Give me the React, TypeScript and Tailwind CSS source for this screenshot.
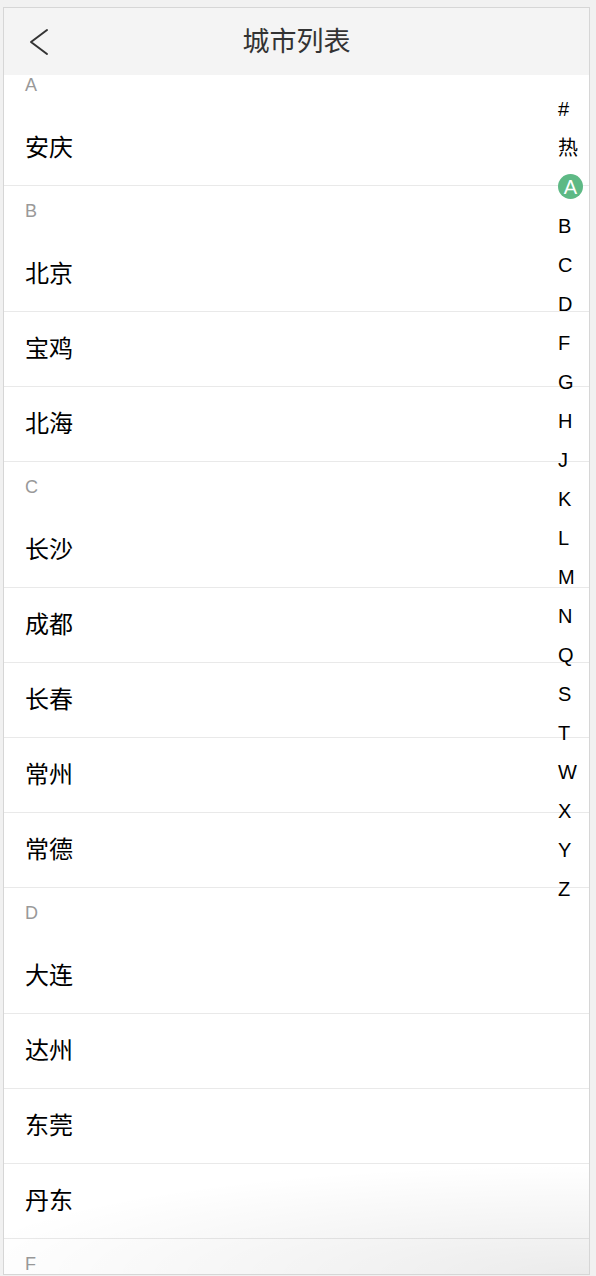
import React from "react";

interface Section {
  letter: string;
  cities: string[];
}

// F 组只露出标题，下面的城市在屏幕外
const sections: Section[] = [
  { letter: "A", cities: ["安庆"] },
  { letter: "B", cities: ["北京", "宝鸡", "北海"] },
  { letter: "C", cities: ["长沙", "成都", "长春", "常州", "常德"] },
  { letter: "D", cities: ["大连", "达州", "东莞", "丹东"] },
  { letter: "F", cities: [] },
];

const indexKeys = ["#", "热", "A", "B", "C", "D", "F", "G", "H", "J", "K", "L", "M", "N", "Q", "S", "T", "W", "X", "Y", "Z"];

const font = { fontFamily: '"Liberation Sans", "Noto Sans CJK SC", sans-serif' };

function NavBar() {
  return (
    <div className="relative flex h-[67px] shrink-0 items-center justify-center bg-[#f4f4f4]">
      <svg
        className="absolute left-[24px]"
        width="22"
        height="28"
        viewBox="0 0 22 28"
        fill="none"
        stroke="#333"
        strokeWidth="2"
        strokeLinecap="round"
        strokeLinejoin="round"
      >
        <polyline points="19,2 3,14 19,26" />
      </svg>
      <h1 className="pt-[2px] text-[27px] leading-none text-[#333]">城市列表</h1>
    </div>
  );
}

function IndexBar({ active }: { active: string }) {
  return (
    <div className="absolute left-[554px] top-[81px] flex flex-col">
      {indexKeys.map((k) => (
        <div key={k} className="flex h-[39px] items-center text-[20px] text-black">
          {k === active ? (
            <span className="flex h-[25px] w-[25px] items-center justify-center rounded-full bg-[#5eb985] text-white">
              {k}
            </span>
          ) : (
            <span>{k}</span>
          )}
        </div>
      ))}
    </div>
  );
}

export default function App() {
  return (
    <div className="h-[1276px] w-[596px] overflow-hidden bg-[#f1f1f1] pl-[3px] pt-[7px]" style={font}>
      <div className="relative flex h-[1268px] w-[587px] flex-col overflow-hidden border border-[#d6d6d6] bg-white">
        <NavBar />
        <div className="flex-1 overflow-hidden">
          <div className="-mt-[15px]">
            {sections.map((s) => (
              <div key={s.letter}>
                <div className="flex h-[51px] items-center pl-[21px] text-[18px] text-[#999]">{s.letter}</div>
                {s.cities.map((c) => (
                  <div key={c} className="flex h-[75px] items-center border-b border-[#e9e9e9] pl-[21px] text-[24px] text-black">
                    {c}
                  </div>
                ))}
              </div>
            ))}
          </div>
        </div>
        <IndexBar active="A" />
        <div className="pointer-events-none absolute inset-x-0 bottom-0 h-[110px] bg-[radial-gradient(ellipse_110%_100%_at_100%_100%,rgba(0,0,0,0.08),rgba(0,0,0,0))]" />
      </div>
    </div>
  );
}
